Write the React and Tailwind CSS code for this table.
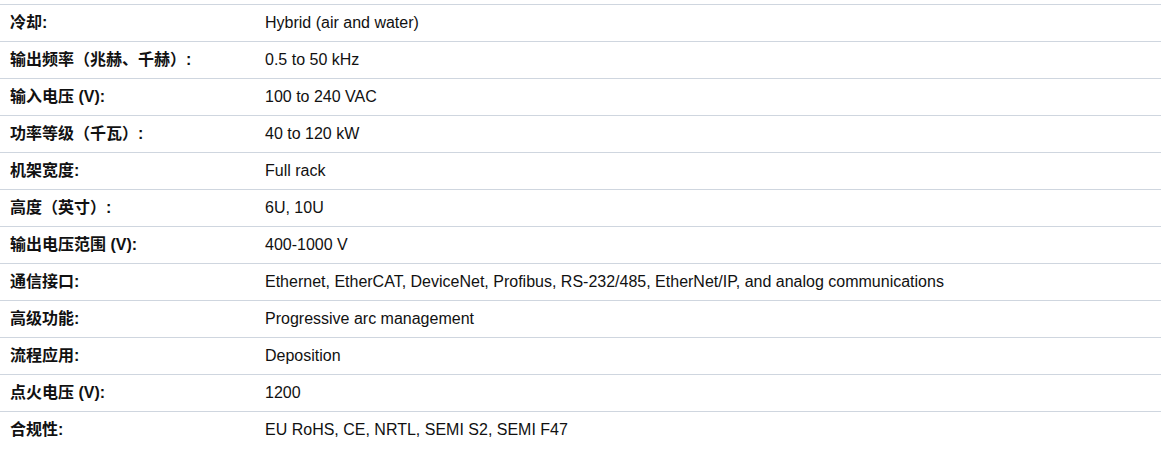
const specs = [
  ['冷却:', 'Hybrid (air and water)'],
  ['输出频率（兆赫、千赫）:', '0.5 to 50 kHz'],
  ['输入电压 (V):', '100 to 240 VAC'],
  ['功率等级（千瓦）:', '40 to 120 kW'],
  ['机架宽度:', 'Full rack'],
  ['高度（英寸）:', '6U, 10U'],
  ['输出电压范围 (V):', '400-1000 V'],
  ['通信接口:', 'Ethernet, EtherCAT, DeviceNet, Profibus, RS-232/485, EtherNet/IP, and analog communications'],
  ['高级功能:', 'Progressive arc management'],
  ['流程应用:', 'Deposition'],
  ['点火电压 (V):', '1200'],
  ['合规性:', 'EU RoHS, CE, NRTL, SEMI S2, SEMI F47'],
]

export default function App() {
  return (
    <div className="w-[1162px] h-[455px] bg-white pt-[4px] font-['Liberation_Sans','Noto_Sans_CJK_SC',sans-serif] text-[16px] text-[#111]">
      <table className="w-[1161px] border-collapse">
        <tbody>
          {specs.map(([label, value]) => (
            <tr key={label} className="h-[37px] border-t border-[#cfd6df]">
              <td className="w-[265px] pl-[10px] font-bold align-middle">{label}</td>
              <td className="align-middle">{value}</td>
            </tr>
          ))}
        </tbody>
      </table>
    </div>
  )
}
